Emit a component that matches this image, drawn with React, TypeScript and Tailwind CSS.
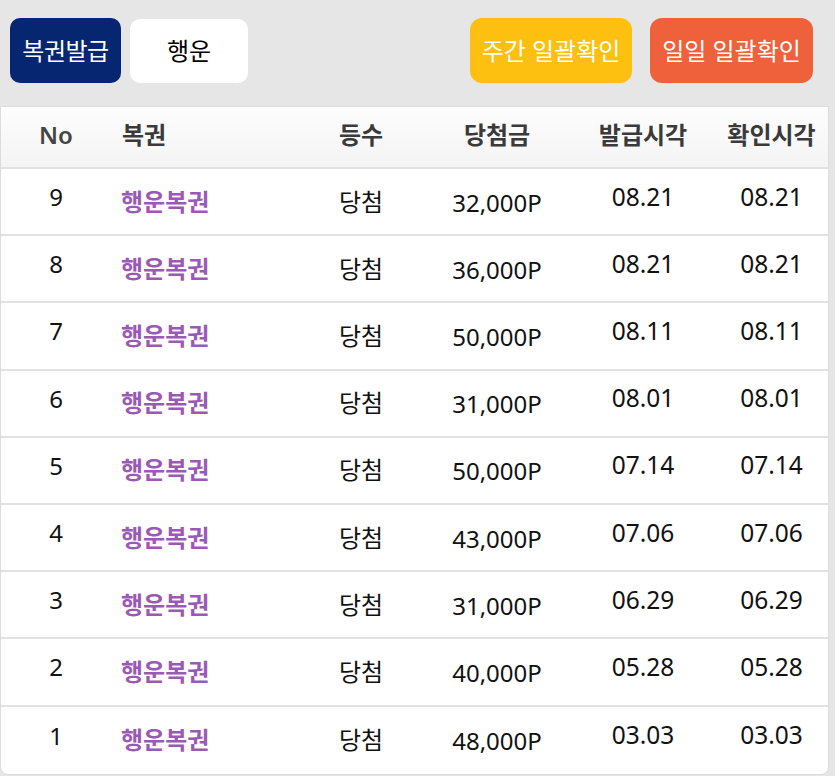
import React from "react";

const rows = [
  { no: 9, amt: "32,000P", issue: "08.21", check: "08.21" },
  { no: 8, amt: "36,000P", issue: "08.21", check: "08.21" },
  { no: 7, amt: "50,000P", issue: "08.11", check: "08.11" },
  { no: 6, amt: "31,000P", issue: "08.01", check: "08.01" },
  { no: 5, amt: "50,000P", issue: "07.14", check: "07.14" },
  { no: 4, amt: "43,000P", issue: "07.06", check: "07.06" },
  { no: 3, amt: "31,000P", issue: "06.29", check: "06.29" },
  { no: 2, amt: "40,000P", issue: "05.28", check: "05.28" },
  { no: 1, amt: "48,000P", issue: "03.03", check: "03.03" },
];

const grid = "grid grid-cols-[110px_190px_120px_152px_140px_1fr]";

export default function App() {
  return (
    <div
      className="w-[835px] h-[776px] bg-[#e6e6e6] overflow-hidden"
      style={{ fontFamily: '"Noto Sans", "Noto Sans CJK KR", sans-serif' }}
    >
      <div className="flex items-center h-[106px] pl-[10px] pr-[22px] pb-[5px]">
        <button className="h-[65px] w-[111px] rounded-[10px] bg-[#072672] text-white text-[24px] tracking-[-0.5px] flex items-center justify-center">
          복권발급
        </button>
        <button className="ml-[9px] h-[64px] w-[118px] rounded-[10px] bg-white text-black text-[24px] flex items-center justify-center">
          행운
        </button>
        <div className="flex-1" />
        <button className="h-[65px] w-[162px] rounded-[12px] bg-[#fdc010] text-white text-[24px] flex items-center justify-center">
          주간 일괄확인
        </button>
        <button className="ml-[18px] h-[65px] w-[163px] rounded-[12px] bg-[#ee613a] text-white text-[24px] flex items-center justify-center">
          일일 일괄확인
        </button>
      </div>
      <div className="w-[829px] bg-white rounded-b-[8px] border border-[#dcdcdc] overflow-hidden">
        <div
          className={`${grid} h-[62px] items-center bg-gradient-to-b from-[#fdfdfd] to-[#f4f4f4] border-b-2 border-[#e2e2e2] text-[24px] font-bold text-[#3a3a3a]`}
        >
          <div className="text-center pb-[4px] font-semibold text-[#444]">No</div>
          <div className="pl-[11px] pb-[4px]">복권</div>
          <div className="text-center pb-[4px]">등수</div>
          <div className="text-center pb-[4px]">당첨금</div>
          <div className="text-center pb-[4px]">발급시각</div>
          <div className="text-center pb-[4px] pl-[2px]">확인시각</div>
        </div>
        {rows.map((r, i) => (
          <div
            key={r.no}
            className={`${grid} h-[67.2px] items-center text-[#111] ${
              i < rows.length - 1 ? "border-b-2 border-[#e2e2e2]" : ""
            }`}
          >
            <div className="text-center text-[24px] pb-[9px]">{r.no}</div>
            <div className="pl-[10px] text-[24px] font-bold text-[#9b59b6]">행운복권</div>
            <div className="text-center text-[24px]">당첨</div>
            <div className="text-center text-[24px] pt-[2px]">{r.amt}</div>
            <div className="text-center text-[24.5px] pb-[9px]">{r.issue}</div>
            <div className="text-center text-[24.5px] pb-[9px] pl-[2px]">{r.check}</div>
          </div>
        ))}
      </div>
    </div>
  );
}
